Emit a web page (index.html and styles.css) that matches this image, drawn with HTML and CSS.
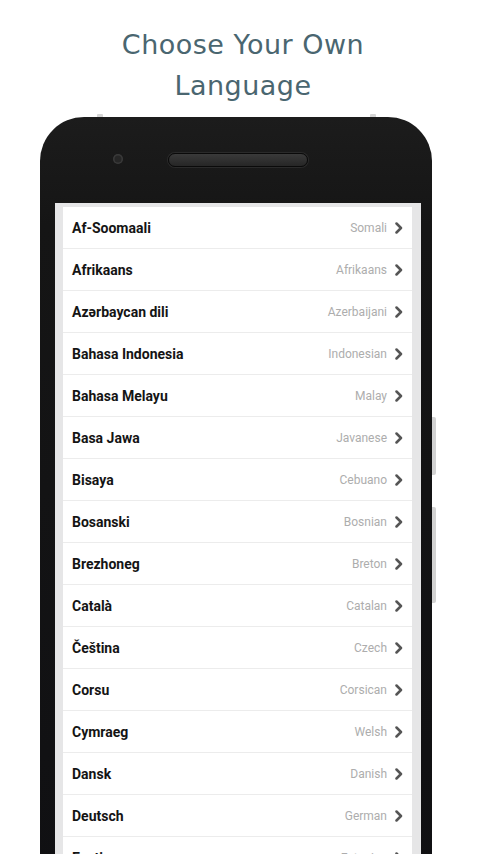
FILE: index.html
```html
<!DOCTYPE html>
<html lang="en">
<head>
<meta charset="utf-8">
<title>Choose Your Own Language</title>
<link rel="stylesheet" href="styles.css">
</head>
<body>
<h1 class="title">Choose Your Own<br>Language</h1>
<div class="phone">
  <span class="mark mark-left"></span>
  <span class="mark mark-right"></span>
  <span class="side-btn side-btn-1"></span>
  <span class="side-btn side-btn-2"></span>
  <div class="bezel-top">
    <span class="camera"></span>
    <span class="speaker"></span>
  </div>
  <div class="screen">
    <ul class="lang-list">
      <li class="lang-row"><span class="native">Af-Soomaali</span><span class="english">Somali</span><svg class="chev" viewBox="0 0 8 12"><path d="M1.5 1.5 L6 6 L1.5 10.5"/></svg></li>
      <li class="lang-row"><span class="native">Afrikaans</span><span class="english">Afrikaans</span><svg class="chev" viewBox="0 0 8 12"><path d="M1.5 1.5 L6 6 L1.5 10.5"/></svg></li>
      <li class="lang-row"><span class="native">Azərbaycan dili</span><span class="english">Azerbaijani</span><svg class="chev" viewBox="0 0 8 12"><path d="M1.5 1.5 L6 6 L1.5 10.5"/></svg></li>
      <li class="lang-row"><span class="native">Bahasa Indonesia</span><span class="english">Indonesian</span><svg class="chev" viewBox="0 0 8 12"><path d="M1.5 1.5 L6 6 L1.5 10.5"/></svg></li>
      <li class="lang-row"><span class="native">Bahasa Melayu</span><span class="english">Malay</span><svg class="chev" viewBox="0 0 8 12"><path d="M1.5 1.5 L6 6 L1.5 10.5"/></svg></li>
      <li class="lang-row"><span class="native">Basa Jawa</span><span class="english">Javanese</span><svg class="chev" viewBox="0 0 8 12"><path d="M1.5 1.5 L6 6 L1.5 10.5"/></svg></li>
      <li class="lang-row"><span class="native">Bisaya</span><span class="english">Cebuano</span><svg class="chev" viewBox="0 0 8 12"><path d="M1.5 1.5 L6 6 L1.5 10.5"/></svg></li>
      <li class="lang-row"><span class="native">Bosanski</span><span class="english">Bosnian</span><svg class="chev" viewBox="0 0 8 12"><path d="M1.5 1.5 L6 6 L1.5 10.5"/></svg></li>
      <li class="lang-row"><span class="native">Brezhoneg</span><span class="english">Breton</span><svg class="chev" viewBox="0 0 8 12"><path d="M1.5 1.5 L6 6 L1.5 10.5"/></svg></li>
      <li class="lang-row"><span class="native">Català</span><span class="english">Catalan</span><svg class="chev" viewBox="0 0 8 12"><path d="M1.5 1.5 L6 6 L1.5 10.5"/></svg></li>
      <li class="lang-row"><span class="native">Čeština</span><span class="english">Czech</span><svg class="chev" viewBox="0 0 8 12"><path d="M1.5 1.5 L6 6 L1.5 10.5"/></svg></li>
      <li class="lang-row"><span class="native">Corsu</span><span class="english">Corsican</span><svg class="chev" viewBox="0 0 8 12"><path d="M1.5 1.5 L6 6 L1.5 10.5"/></svg></li>
      <li class="lang-row"><span class="native">Cymraeg</span><span class="english">Welsh</span><svg class="chev" viewBox="0 0 8 12"><path d="M1.5 1.5 L6 6 L1.5 10.5"/></svg></li>
      <li class="lang-row"><span class="native">Dansk</span><span class="english">Danish</span><svg class="chev" viewBox="0 0 8 12"><path d="M1.5 1.5 L6 6 L1.5 10.5"/></svg></li>
      <li class="lang-row"><span class="native">Deutsch</span><span class="english">German</span><svg class="chev" viewBox="0 0 8 12"><path d="M1.5 1.5 L6 6 L1.5 10.5"/></svg></li>
      <li class="lang-row"><span class="native">Eesti</span><span class="english">Estonian</span><svg class="chev" viewBox="0 0 8 12"><path d="M1.5 1.5 L6 6 L1.5 10.5"/></svg></li>
    </ul>
  </div>
</div>
</body>
</html>
```
FILE: styles.css
```css
* { box-sizing: border-box; }

html, body {
  margin: 0;
  padding: 0;
  background: #ffffff;
  height: 854px;
  overflow: hidden;
}

.title {
  margin: 0;
  padding: 24px 0 0 6px;
  text-align: center;
  font-family: "DejaVu Sans", Verdana, sans-serif;
  font-weight: normal;
  font-size: 27px;
  line-height: 41px;
  letter-spacing: 0.5px;
  color: #4a6670;
}

.phone {
  position: relative;
  margin: 11px 0 0 40px;
  width: 392px;
  height: 900px;
  padding: 0 11px 0 15px;
  border-radius: 44px 44px 0 0;
  background: linear-gradient(180deg, #1c1c1c 0%, #151515 12%, #0f0f12 100%);
  display: flex;
  flex-direction: column;
}

.mark {
  position: absolute;
  top: -3px;
  width: 6px;
  height: 3px;
  background: #d6d6d6;
  border-radius: 1px 1px 0 0;
}
.mark-left { left: 57px; }
.mark-right { left: 330px; }

.side-btn {
  position: absolute;
  right: -4px;
  width: 4px;
  background: #d2d2d2;
  border-radius: 0 2px 2px 0;
}
.side-btn-1 { top: 300px; height: 58px; }
.side-btn-2 { top: 390px; height: 96px; }

.bezel-top {
  height: 86px;
  display: flex;
  align-items: center;
  padding-left: 58px;
  gap: 45px;
}

.camera {
  width: 10px;
  height: 10px;
  margin-top: -2px;
  border-radius: 50%;
  background: #262626;
  box-shadow: inset 0 0 0 1.5px #3a3a3a;
}

.speaker {
  width: 140px;
  height: 14px;
  border-radius: 7px;
  background: linear-gradient(180deg, #3a3a3a 0%, #2e2e2e 60%, #262626 100%);
  border: 1.5px solid #0a0a0a;
  box-shadow: 0 0 0 1px #2a2a2a;
}

.screen {
  flex: 1;
  background: #e6e6e7;
  padding: 4px 9px 0 8px;
}

.lang-list {
  list-style: none;
  margin: 0;
  padding: 0;
  background: #ffffff;
}

.lang-row {
  height: 42px;
  display: flex;
  align-items: center;
  padding: 0 9px 0 9px;
  border-bottom: 1px solid #ececec;
}

.native {
  flex: 1;
  font-family: Roboto, "Liberation Sans", sans-serif;
  font-weight: 700;
  font-size: 14px;
  color: #141414;
}

.english {
  font-family: Roboto, "Liberation Sans", sans-serif;
  font-size: 12px;
  color: #adadad;
  margin-right: 8px;
}

.chev {
  width: 8px;
  height: 12px;
  fill: none;
  stroke: #555555;
  stroke-width: 2.5;
  stroke-linecap: round;
  stroke-linejoin: round;
}
```
